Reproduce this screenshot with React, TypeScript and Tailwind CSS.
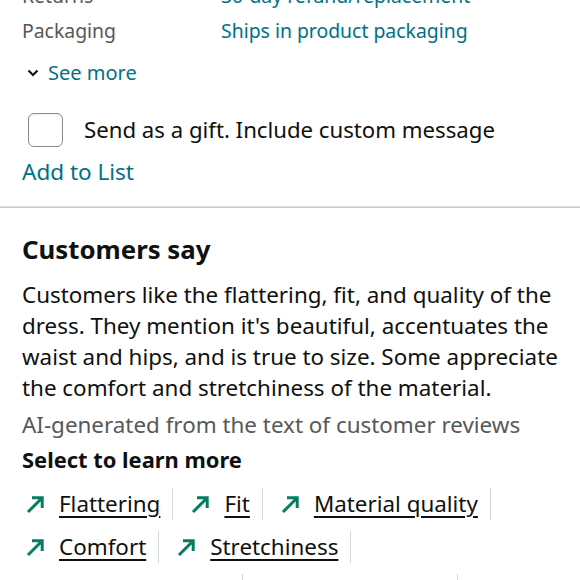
import React from 'react';

const chipsRow1 = ['Flattering', 'Fit', 'Material quality'];
const chipsRow2 = ['Comfort', 'Stretchiness'];

const Arrow = () => (
  <svg width="20" height="20" viewBox="0 0 20 20" className="shrink-0">
    <path d="M2 18 L15.5 4.5 M6 3.8 H16.2 V14" fill="none" stroke="#067D62" strokeWidth="3" strokeLinecap="butt" />
  </svg>
);

const Chip = ({ label }: { label: string }) => (
  <div className="flex items-center h-[32px] border-r border-[#d5d9d9] pl-[4px] pr-[12px] mr-[14px]">
    <Arrow />
    <span className="ml-[13px] underline underline-offset-[4px] decoration-[1.5px] text-[#0f1111]">{label}</span>
  </div>
);

export default function App() {
  return (
    <div className="w-[580px] h-[580px] overflow-hidden bg-white text-[#0f1111]" style={{ fontFamily: '"Noto Sans", "Open Sans", sans-serif' }}>
      <div className="px-[22px] -mt-[19px]">
        {/* detail rows */}
        <div className="flex text-[19.4px] leading-[30px] h-[30px]">
          <span className="w-[199px] text-[#565959]">Returns</span>
          <span className="text-[#007185]">30-day refund/replacement</span>
        </div>
        <div className="flex text-[19.4px] leading-[30px] mt-[5px]">
          <span className="w-[199px] text-[#565959]">Packaging</span>
          <span className="text-[#007185]">Ships in product packaging</span>
        </div>

        <div className="flex items-center mt-[12px] pl-[5px] text-[20px] leading-[30px] text-[#007185]">
          <svg width="12" height="10" viewBox="0 0 12 10" className="mr-[9px]">
            <path d="M1.5 2.5 L6 7 L10.5 2.5" fill="none" stroke="#0f1111" strokeWidth="2.2" />
          </svg>
          <span>See more</span>
        </div>

        <div className="flex items-center mt-[25px] pl-[6px]">
          <div className="w-[35px] h-[34px] rounded-[6px] border border-[#888c8c] bg-white shadow-[inset_0_1px_2px_rgba(15,17,17,0.08)]" />
          <span className="ml-[21px] text-[22.2px] leading-[34px]">Send as a gift. Include custom message</span>
        </div>

        <div className="text-[22.5px] leading-[32px] mt-[9px] text-[#007185]">Add to List</div>
      </div>

      <div className="mt-[18px] h-[2px] bg-[#dddddd] border-b border-[#cccccc]" />

      <div className="px-[22px] pt-[23px]">
        <h2 className="text-[25.8px] leading-[36px] font-bold">Customers say</h2>
        <p className="mt-[12px] text-[22.4px] leading-[31px]">
          Customers like the flattering, fit, and quality of the dress. They mention it's beautiful, accentuates the waist and hips, and is true to size. Some appreciate the comfort and stretchiness of the material.
        </p>
        <div className="mt-[6px] text-[22.4px] leading-[31px] text-[#565959]">AI-generated from the text of customer reviews</div>
        <div className="mt-[5px] text-[21.9px] leading-[30px] font-bold">Select to learn more</div>

        <div className="mt-[13px] flex text-[22.4px] leading-[30px]">
          {chipsRow1.map((c) => <Chip key={c} label={c} />)}
        </div>
        <div className="mt-[11px] flex text-[22.4px] leading-[30px]">
          {chipsRow2.map((c) => <Chip key={c} label={c} />)}
        </div>
        <div className="mt-[11px] flex h-[32px]">
          <div className="w-[221px] border-r border-[#d5d9d9]" />
          <div className="w-[215px] border-r border-[#d5d9d9]" />
        </div>
      </div>
    </div>
  );
}
